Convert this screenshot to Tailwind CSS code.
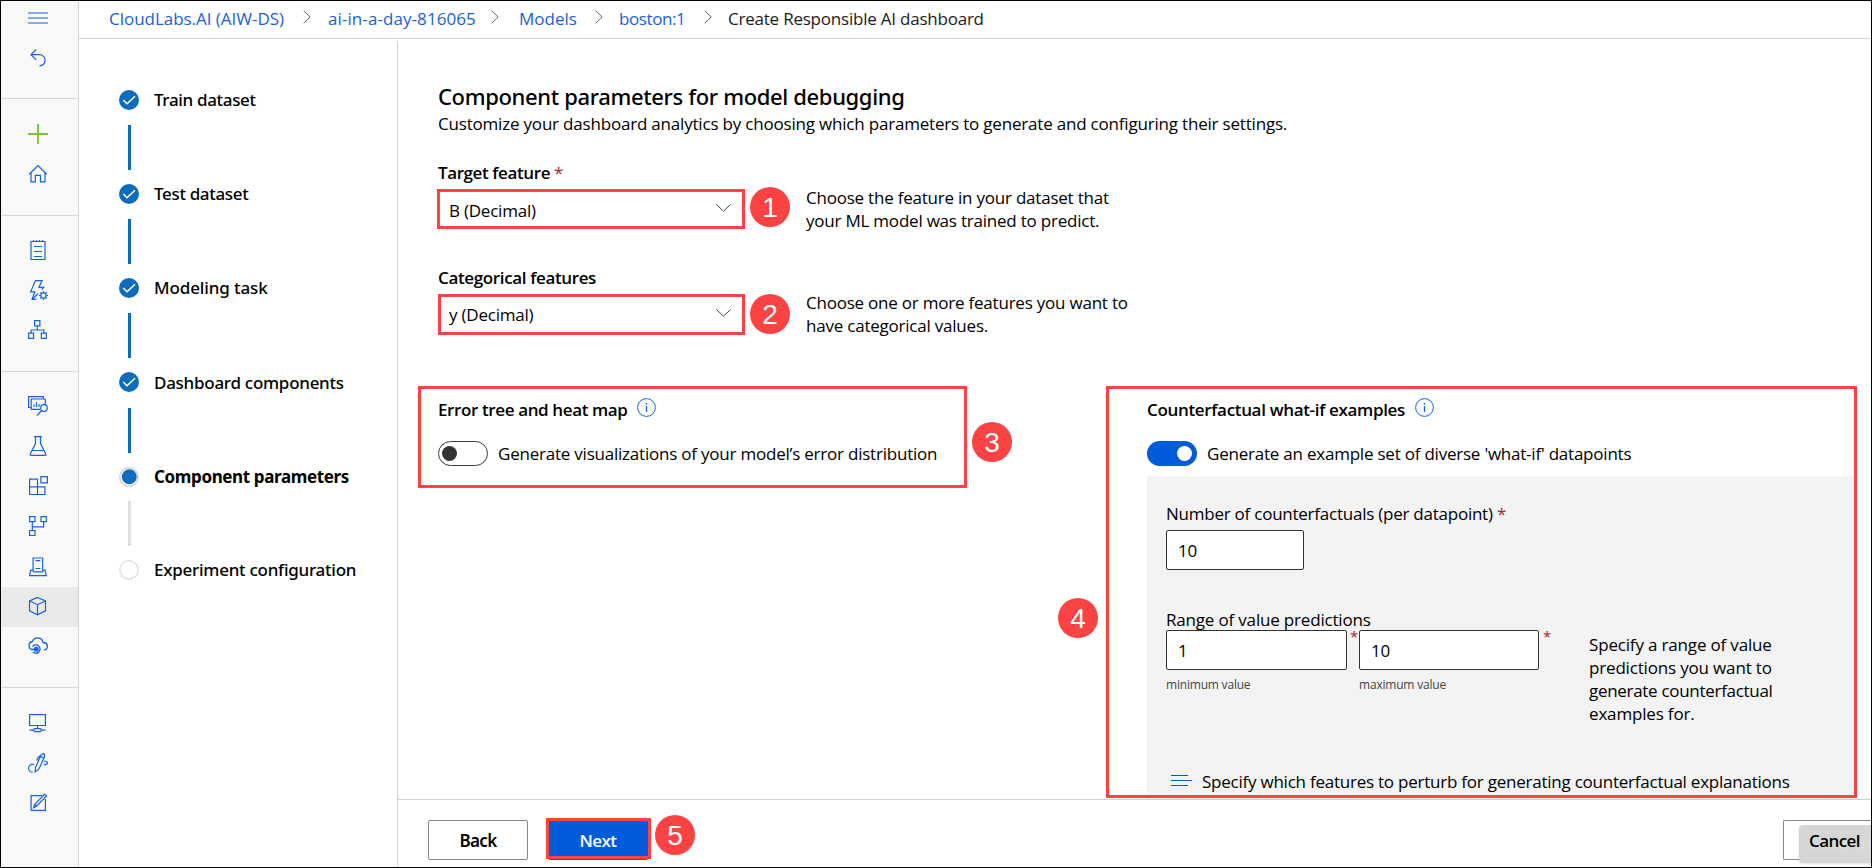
<!DOCTYPE html>
<html lang="en">
<head>
<meta charset="utf-8">
<title>Create Responsible AI dashboard</title>
<script src="https://cdn.jsdelivr.net/npm/@tailwindcss/browser@4"></script>
</head>
<body class="bg-white">
<div class="relative flex h-[868px] w-[1872px] overflow-hidden border border-black bg-white font-['Open_Sans','Noto_Sans',sans-serif] text-[17px] leading-[23px] tracking-[-0.22px] text-black">

  <!-- Icon rail -->
  <nav class="flex w-[78px] shrink-0 flex-col border-r border-[#d2d2d2] bg-[#f9f9f9] text-[#1563dc]">
    <div class="flex h-[98px] flex-col border-b border-[#d8d8d8] pl-[27px]">
      <div class="flex h-[33px] items-center"><svg class="size-5" viewBox="0 0 20 20" fill="none" stroke="currentColor" stroke-width="1.2"><path d="M0 5h20M0 10h20M0 15h20"/></svg></div>
      <div class="flex h-[48px] items-center"><svg class="size-5" viewBox="0 0 20 20" fill="none" stroke="currentColor" stroke-width="1.2"><path d="M8.2 1.500 3 6.700l5.200 5.200M3 6.700h8.500a5.500 5.500 0 0 1 0 11.200"/></svg></div>
    </div>
    <div class="flex h-[117px] flex-col border-b border-[#d8d8d8] pt-[15px] pl-[27px]">
      <div class="flex h-10 items-center"><svg class="size-5" viewBox="0 0 20 20" fill="none" stroke="#7cc43a" stroke-width="1.900"><path d="M0 10h20M10 0v20"/></svg></div>
      <div class="flex h-10 items-center"><svg class="size-5" viewBox="0 0 20 20" fill="none" stroke="currentColor" stroke-width="1.200"><path d="M1.200 10.200 10 1.600l8.800 8.600M3 8.600v9.300h4.300v-6.500h5.200v6.500h4.500V8.600"/></svg></div>
    </div>
    <div class="flex h-[156px] flex-col border-b border-[#d8d8d8] pt-[14px] pl-[27px]">
      <div class="flex h-10 items-center"><svg class="size-5" viewBox="0 0 20 20" fill="none" stroke="currentColor" stroke-width="1.200"><path d="M3 1.500h14v18H3zM6 6.500h8M6 11.500h8M6 16.500h8M5.500 0v2M8.500 0v2M11.500 0v2M14.500 0v2"/></svg></div>
      <div class="flex h-10 items-center"><svg class="size-5" viewBox="0 0 20 20" fill="none" stroke="currentColor" stroke-width="1.200"><path d="M8.500 19.200 4 19.500l2.800-7.700H2.600L7.500.600H14L11 7.300h4.800l-2.300 2.300M4.300 19.300l6-5.800"/><circle cx="15.500" cy="15.500" r="2.700"/><path d="M15.500 11v1.800M15.500 18.200V20M11 15.500h1.800M18.200 15.500H20M12.300 12.300l1.300 1.300M17.400 17.400l1.300 1.300M12.300 18.700l1.300-1.300M17.400 13.600l1.300-1.300"/></svg></div>
      <div class="flex h-10 items-center"><svg class="size-5" viewBox="0 0 20 20" fill="none" stroke="currentColor" stroke-width="1.200"><path d="M6.600.600h5.300v5.300H6.600zM.600 13.200h5v5.200h-5zM13.300 13.200h5v5.200h-5zM9.300 6v4M3.100 13v-3h12.700v3"/></svg></div>
    </div>
    <div class="flex h-[316px] flex-col border-b border-[#d8d8d8] pt-[15px]">
      <div class="flex h-10 items-center pb-[2px] pl-[27px]"><svg class="size-5" viewBox="0 0 20 20" fill="none" stroke="currentColor" stroke-width="1.200"><path d="M2.800 11.500H.600V.600h14.700v2M12 13.300H3.200V3h14v6M6 11V8.500M8.500 11V6M11 11V8M13.500 14.500l-4.300 5"/><circle cx="16" cy="12" r="3.300"/></svg></div>
      <div class="flex h-10 items-center pb-[2px] pl-[27px]"><svg class="size-5" viewBox="0 0 20 20" fill="none" stroke="currentColor" stroke-width="1.200"><path d="M6 .600h8M7.500.600v7L2.200 18c-.400.900 0 1.400.700 1.400h14.200c.800 0 1.100-.600.700-1.400L12.500 7.600v-7M4.200 14.500h11.600"/></svg></div>
      <div class="flex h-10 items-center pb-[2px] pl-[27px]"><svg class="size-5" viewBox="0 0 20 20" fill="none" stroke="currentColor" stroke-width="1.200"><path d="M1.600 3.100h7.900v15.400H1.600zM1.600 10.800h15.300v7.700H9.500M12.900.600h6.500v6.300h-6.500z"/></svg></div>
      <div class="flex h-10 items-center pb-[2px] pl-[27px]"><svg class="size-5" viewBox="0 0 20 20" fill="none" stroke="currentColor" stroke-width="1.200"><path d="M1.600.600H7v5H1.600zM13 .600h5.300v5H13zM1.600 14.500H7v5H1.600zM4.300 5.600v8.900M4.300 10.800h11.300V5.600"/></svg></div>
      <div class="flex h-10 items-center pl-[27px]"><svg class="size-5" viewBox="0 0 20 20" fill="none" stroke="currentColor" stroke-width="1.200"><path d="M5.100 15V1h9.600v14M5.100 13.200H2.700l-1.100 5.400h16.700l-1.200-5.400h-2.400M7.500 3.700h4.800M7.500 11.500h4.800M5.100 14.900h9.600"/></svg></div>
      <div class="flex h-10 items-center bg-[#e9e9e9] pb-[2px] pl-[27px]"><svg class="size-5" viewBox="0 0 20 20" fill="none" stroke="currentColor" stroke-width="1.200"><path d="M9.500 1.500 17.500 5v9.800l-8 4-8-4V5zM1.500 5l8 3.700 8-3.700M9.500 8.700v10"/></svg></div>
      <div class="flex h-10 items-center pb-[3px] pl-[27px]"><svg class="size-5" viewBox="0 0 20 20" fill="none" stroke="currentColor" stroke-width="1.300"><path d="M5 13.800a4.200 4.200 0 0 1-.600-8.300A5.500 5.500 0 0 1 15 6.500c2.700.200 4.400 1.800 4.400 4a3.500 3.500 0 0 1-3.600 3.400"/><path d="M4.500 10.500a4.200 4.200 0 1 1 .300 5.500"/><circle cx="8.200" cy="13.300" r="1.900" fill="currentColor"/><path d="M4 13.300h4"/></svg></div>
    </div>
    <div class="flex flex-col pt-[15px] pl-[27px]">
      <div class="flex h-10 items-center"><svg class="size-5" viewBox="0 0 20 20" fill="none" stroke="currentColor" stroke-width="1.200"><path d="M1.600 1.600h15.800v10.900H1.600zM9.500 12.500V15M1.500 17.200h4M13.500 17.200h4M6.600 15.600h5.800l1.200 1.500-1.200 1.500H6.600l-1.200-1.500z"/></svg></div>
      <div class="flex h-10 items-center"><svg class="size-5" viewBox="0 0 20 20" fill="none" stroke="currentColor" stroke-width="1.200"><path d="M6 11.300H4.600a4 4 0 0 0 0 8M7.200 18.800l.300-4.300L13 2.200l2-1.600 1.600.800-.200 2.600-5.600 12.200zM12.500 3.500l3.500 1.700M12.700 2.800c-1.700 0-3.200 2.200-4 4.700M16 8c2 0 3.400.600 3.400 1.900 0 1.200-1.300 1.700-3.600 1.700"/></svg></div>
      <div class="flex h-10 items-center"><svg class="size-5" viewBox="0 0 20 20" fill="none" stroke="currentColor" stroke-width="1.200"><path d="M14 2.600H3.100v14.800h14.300V6M5.600 14.800l1.100-3.500L16.800 1.200l1.700 1.700L8.400 13.200zM6.700 11.300l1.700 1.900"/></svg></div>
    </div>
  </nav>

  <div class="flex min-w-0 flex-1 flex-col">
    <!-- Breadcrumb -->
    <header class="flex h-[38px] shrink-0 items-start border-b border-[#d2d2d2] pt-[6px] pl-[30px] whitespace-nowrap text-[#1a62d6]">
      <span class="w-[194px] tracking-[-0.03px]">CloudLabs.AI (AIW-DS)</span>
      <svg class="mt-[3px] mr-[17px] h-[14px] w-2 shrink-0" viewBox="0 0 8 14" fill="none" stroke="#666"><path d="M.700.700 7.200 7 .700 13.300"/></svg>
      <span class="w-[163px] tracking-[0.08px]">ai-in-a-day-816065</span>
      <svg class="mt-[3px] mr-[20px] h-[14px] w-2 shrink-0" viewBox="0 0 8 14" fill="none" stroke="#666"><path d="M.700.700 7.200 7 .700 13.300"/></svg>
      <span class="w-[76px] tracking-normal">Models</span>
      <svg class="mt-[3px] mr-[16px] h-[14px] w-2 shrink-0" viewBox="0 0 8 14" fill="none" stroke="#666"><path d="M.700.700 7.200 7 .700 13.300"/></svg>
      <span class="w-[85px] tracking-[-0.4px]">boston:1</span>
      <svg class="mt-[3px] mr-[16px] h-[14px] w-2 shrink-0" viewBox="0 0 8 14" fill="none" stroke="#666"><path d="M.700.700 7.200 7 .700 13.300"/></svg>
      <span class="text-[#1b1b1b]">Create Responsible AI dashboard</span>
    </header>

    <div class="flex min-h-0 flex-1">
      <!-- Wizard steps -->
      <aside class="mt-[2px] flex w-[319px] shrink-0 flex-col border-r border-[#d2d2d2] pt-[49px] pl-[40px] font-['Noto_Sans',sans-serif] font-medium">
        <div class="flex h-[94px] gap-[15px]">
          <div class="flex flex-col items-center gap-[15px]"><svg class="size-5" viewBox="0 0 20 20"><circle cx="10" cy="10" r="10" fill="#0f6cbd"/><path d="m4.300 10 3.700 3.800 8-7.600" fill="none" stroke="#fff" stroke-width="1.500"/></svg><div class="h-[45px] w-[3px] bg-[#0f6cbd]"></div></div>
          <span class="-mt-[2px] tracking-[-0.33px]">Train dataset</span>
        </div>
        <div class="flex h-[94px] gap-[15px]">
          <div class="flex flex-col items-center gap-[15px]"><svg class="size-5" viewBox="0 0 20 20"><circle cx="10" cy="10" r="10" fill="#0f6cbd"/><path d="m4.300 10 3.700 3.800 8-7.600" fill="none" stroke="#fff" stroke-width="1.500"/></svg><div class="h-[45px] w-[3px] bg-[#0f6cbd]"></div></div>
          <span class="-mt-[2px] tracking-[-0.33px]">Test dataset</span>
        </div>
        <div class="flex h-[94px] gap-[15px]">
          <div class="flex flex-col items-center gap-[15px]"><svg class="size-5" viewBox="0 0 20 20"><circle cx="10" cy="10" r="10" fill="#0f6cbd"/><path d="m4.300 10 3.700 3.800 8-7.600" fill="none" stroke="#fff" stroke-width="1.500"/></svg><div class="h-[45px] w-[3px] bg-[#0f6cbd]"></div></div>
          <span class="-mt-[2px] tracking-[-0.12px]">Modeling task</span>
        </div>
        <div class="flex h-[95px] gap-[15px]">
          <div class="flex flex-col items-center gap-[16px]"><svg class="size-5" viewBox="0 0 20 20"><circle cx="10" cy="10" r="10" fill="#0f6cbd"/><path d="m4.300 10 3.700 3.800 8-7.600" fill="none" stroke="#fff" stroke-width="1.500"/></svg><div class="h-[45px] w-[3px] bg-[#0f6cbd]"></div></div>
          <span class="-mt-[1px] tracking-[-0.27px]">Dashboard components</span>
        </div>
        <div class="flex h-[93px] gap-[15px]">
          <div class="flex flex-col items-center gap-[14px]"><svg class="size-5" viewBox="0 0 20 20"><circle cx="10" cy="10" r="9.200" fill="#fff" stroke="#d2d0ce" stroke-width="1.500"/><circle cx="10.300" cy="9.800" r="7.500" fill="#0f6cbd"/></svg><div class="h-[45px] w-[3px] bg-[#e1dfdd]"></div></div>
          <span class="-mt-[2px] font-bold tracking-[-0.37px]">Component parameters</span>
        </div>
        <div class="flex gap-[15px]">
          <svg class="size-5" viewBox="0 0 20 20"><circle cx="10" cy="10" r="9.200" fill="#fff" stroke="#e1dfdd" stroke-width="1.500"/></svg>
          <span class="-mt-[2px] tracking-[-0.25px]">Experiment configuration</span>
        </div>
      </aside>

      <main class="flex min-w-0 flex-1 flex-col">
        <section class="h-[761px] overflow-hidden border-b border-[#d2d2d2] pt-[42px] pl-[40px] whitespace-nowrap">
          <h1 class="font-['Noto_Sans',sans-serif] text-[22px] leading-[30px] font-medium tracking-[-0.35px]">Component parameters for model debugging</h1>
          <p class="h-[50px] pt-px leading-6 tracking-[-0.195px]">Customize your dashboard analytics by choosing which parameters to generate and configuring their settings.</p>

          <div class="flex h-[105px]">
            <div class="w-[307px]">
              <div class="font-semibold tracking-[-0.4px]">Target feature <span class="font-normal text-[#a4262c]">*</span></div>
              <div class="mt-[6px] flex h-10 items-center justify-between pt-[1px] pr-[14px] pl-[11px]">B (Decimal)<svg class="-mt-[6px] h-2 w-[15px]" viewBox="0 0 15 8" fill="none" stroke="#444"><path d="m.500.500 7 6.700 7-6.700"/></svg></div>
            </div>
            <p class="mt-[25px] ml-[61px]">Choose the feature in your dataset that<br>your ML model was trained to predict.</p>
          </div>
          <div class="flex h-[131px]">
            <div class="w-[307px]">
              <div class="font-semibold tracking-[-0.36px]">Categorical features</div>
              <div class="mt-[5px] flex h-10 items-center justify-between pt-[1px] pr-[14px] pl-[11px]">y (Decimal)<svg class="-mt-[4px] h-2 w-[15px]" viewBox="0 0 15 8" fill="none" stroke="#444"><path d="m.500.500 7 6.700 7-6.700"/></svg></div>
            </div>
            <p class="mt-[25px] ml-[61px]">Choose one or more features you want to<br>have categorical values.</p>
          </div>

          <div class="grid grid-cols-[709px_709px]">
            <div>
              <div class="flex h-[44px] gap-[9px]">
                <h2 class="pt-px font-semibold tracking-[-0.38px]">Error tree and heat map</h2>
                <svg class="mt-[1px] size-[19px]" viewBox="0 0 19 19" fill="none" stroke="#1563dc"><circle cx="9.500" cy="9.500" r="8.900"/><path d="M9.500 8v6" stroke-width="1.300"/><path d="M9.500 5v1.500" stroke-width="1.500"/></svg>
              </div>
              <div class="flex">
                <div class="flex h-[25px] w-[50px] items-center rounded-full border border-[#3b3a39] pl-[3px]"><div class="size-[15px] rounded-full bg-[#333]"></div></div>
                <span class="ml-[10px] pt-px">Generate visualizations of your model’s error distribution</span>
              </div>
            </div>
            <div>
              <div class="flex h-[44px] gap-[10px]">
                <h2 class="pt-px font-semibold tracking-[-0.33px]">Counterfactual what-if examples</h2>
                <svg class="mt-[1px] size-[19px]" viewBox="0 0 19 19" fill="none" stroke="#1563dc"><circle cx="9.500" cy="9.500" r="8.900"/><path d="M9.500 8v6" stroke-width="1.300"/><path d="M9.500 5v1.500" stroke-width="1.500"/></svg>
              </div>
              <div class="flex h-[35px]">
                <div class="flex h-[25px] w-[50px] items-center justify-end rounded-full bg-[#015cda] pr-[5px]"><div class="size-[15px] rounded-full bg-white"></div></div>
                <span class="ml-[10px] pt-px">Generate an example set of diverse 'what-if' datapoints</span>
              </div>
              <div class="flex h-[324px] flex-col bg-[#f3f3f3] pt-[26px] pl-[19px]">
                <div class="tracking-[-0.24px]">Number of counterfactuals (per datapoint) <span class="text-[#a4262c]">*</span></div>
                <div class="mt-[5px] flex h-10 w-[138px] items-center rounded-[2px] border border-[#333] bg-white pl-[11px]">10</div>
                <div class="mt-[38px] h-[22px] tracking-[-0.18px]">Range of value predictions</div>
                <div class="flex">
                  <div class="flex w-[193px]">
                    <div>
                      <div class="flex h-10 w-[181px] items-center rounded-[2px] border border-[#333] bg-white pl-[11px]">1</div>
                      <div class="mt-[3px] text-[12px] tracking-[-0.2px] text-[#444]">minimum value</div>
                    </div>
                    <span class="-mt-[5px] ml-[3px] text-[15px] text-[#a4262c]">*</span>
                  </div>
                  <div class="flex w-[230px]">
                    <div>
                      <div class="flex h-10 w-[180px] items-center rounded-[2px] border border-[#333] bg-white pl-[11px]">10</div>
                      <div class="mt-[3px] text-[12px] tracking-[-0.2px] text-[#444]">maximum value</div>
                    </div>
                    <span class="-mt-[5px] ml-[4px] text-[15px] text-[#a4262c]">*</span>
                  </div>
                  <p class="mt-[3px] tracking-[-0.17px]">Specify a range of value<br>predictions you want to<br><span class="tracking-[-0.3px]">generate counterfactual</span><br>examples for.</p>
                </div>
                <div class="mt-[45px] flex pl-[5px]">
                  <svg class="mt-[4px] mr-[10px] h-[13px] w-[21px]" viewBox="0 0 21 13" fill="none" stroke="#015cda"><path d="M0 1.500h17M0 6.500h21M0 11.500h17"/></svg>
                  <span class="tracking-[-0.235px]">Specify which features to perturb for generating counterfactual explanations</span>
                </div>
              </div>
            </div>
          </div>
        </section>

        <!-- Wizard footer -->
        <footer class="flex flex-1 pt-[20px] pl-[30px]">
          <div class="flex h-10 w-[100px] items-center justify-center rounded-[2px] border border-[#8a8886] font-['Noto_Sans',sans-serif] font-semibold tracking-[-0.7px]">Back</div>
          <div class="ml-[20px] flex h-10 w-[100px] items-center justify-center rounded-[2px] bg-[#015cda] font-semibold tracking-[-0.5px] text-white">Next</div>
          <div class="relative ml-auto h-10 w-[88px] rounded-l-[2px] border border-r-0 border-[#8a8886]">
            <div class="absolute top-[4px] left-[15px] h-[38px] w-[90px] rounded-[4px] bg-[#d6d6d6] shadow"></div>
            <div class="absolute top-[12px] left-[25px] whitespace-nowrap text-[#dddddd]">Show des</div>
            <div class="absolute top-[8px] left-[25px] font-semibold tracking-[-0.6px]">Cancel</div>
          </div>
        </footer>
      </main>
    </div>
  </div>

  <!-- Numbered callouts over the page -->
  <div class="absolute top-[188px] left-[436px] h-[40px] w-[308px] border-3 border-[#fc4343]"></div>
  <div class="absolute top-[293px] left-[437px] h-[41px] w-[307px] border-3 border-[#fc4343]"></div>
  <div class="absolute top-[385px] left-[417px] h-[102px] w-[549px] border-3 border-[#fc4343]"></div>
  <div class="absolute top-[385px] left-[1105px] h-[412px] w-[751px] border-3 border-[#fc4343]"></div>
  <div class="absolute top-[817px] left-[545px] h-[41px] w-[105px] border-3 border-[#fc4343]"></div>
  <div class="absolute top-[186px] left-[749px] flex size-10 items-center justify-center rounded-full bg-[#fc4343] font-['Liberation_Sans',sans-serif] text-[28px] tracking-normal text-white">1</div>
  <div class="absolute top-[293px] left-[749px] flex size-10 items-center justify-center rounded-full bg-[#fc4343] font-['Liberation_Sans',sans-serif] text-[28px] tracking-normal text-white">2</div>
  <div class="absolute top-[421px] left-[971px] flex size-10 items-center justify-center rounded-full bg-[#fc4343] font-['Liberation_Sans',sans-serif] text-[28px] tracking-normal text-white">3</div>
  <div class="absolute top-[597px] left-[1057px] flex size-10 items-center justify-center rounded-full bg-[#fc4343] font-['Liberation_Sans',sans-serif] text-[28px] tracking-normal text-white">4</div>
  <div class="absolute top-[814px] left-[654px] flex size-10 items-center justify-center rounded-full bg-[#fc4343] font-['Liberation_Sans',sans-serif] text-[28px] tracking-normal text-white">5</div>
</div>
</body>
</html>
